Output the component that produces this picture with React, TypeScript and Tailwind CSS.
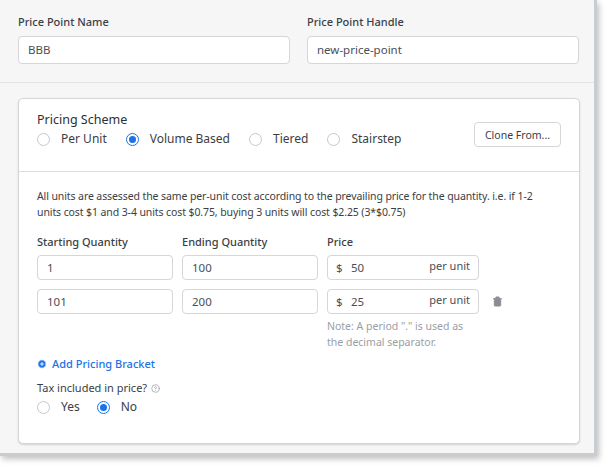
import { Trash2, PlusCircle, HelpCircle } from "lucide-react";

const Radio = ({ label, checked }: { label: string; checked?: boolean }) => (
  <label className="flex items-center gap-[11px]">
    <span
      className={`w-[13px] h-[13px] rounded-full flex items-center justify-center bg-white ${
        checked ? "border border-[#1a73e8]" : "border border-[#c4c7cc]"
      }`}
    >
      {checked && <span className="w-[7px] h-[7px] rounded-full bg-[#1a73e8]"></span>}
    </span>
    <span>{label}</span>
  </label>
);

const Field = ({ value, w }: { value: string; w: string }) => (
  <div className={`${w} h-[25px] border border-[#d4d6da] rounded-[4px] bg-white flex items-center px-[9px] text-[11.5px] text-[#4a4f57]`}>
    {value}
  </div>
);

const PriceField = ({ value }: { value: string }) => (
  <div className="w-[152px] h-[25px] border border-[#d4d6da] rounded-[4px] bg-white flex items-center px-[8px] text-[11.5px] text-[#4a4f57]">
    <span className="w-[15px]">$</span>
    <span className="flex-1">{value}</span>
    <span className="text-[11px] -mt-[3px]">per unit</span>
  </div>
);

export default function App() {
  const rows = [
    { start: "1", end: "100", price: "50" },
    { start: "101", end: "200", price: "25" },
  ];
  return (
    <div className="w-[613px] h-[472px] bg-white font-['Inter',sans-serif] text-[#2b2f36] relative leading-[16px]">
      <div className="w-[597px] h-[456px] bg-[#f6f6f7] border-r-[3px] border-b-[3px] border-[#c9ccd0] shadow-[2px_3px_6px_rgba(0,0,0,0.25)]">
        <div className="flex gap-[17px] px-[18px] pt-[14px] pb-[18px] border-b border-[#e3e4e6]">
          <div className="flex flex-col gap-[6px]">
            <span className="text-[11px] font-medium text-[#3a3e45] leading-[16px]">Price Point Name</span>
            <Field value="BBB" w="w-[272px] h-[28px]" />
          </div>
          <div className="flex flex-col gap-[6px]">
            <span className="text-[11px] font-medium text-[#3a3e45] leading-[16px]">Price Point Handle</span>
            <Field value="new-price-point" w="w-[272px] h-[28px]" />
          </div>
        </div>
        <div className="px-[18px] pt-[15px]">
          <div className="w-[562px] h-[346px] bg-white border border-[#d4d6da] rounded-[5px] shadow-[0_1px_2px_rgba(0,0,0,0.15)]">
            <div className="h-[73px] border-b border-[#dcdee1] flex items-start justify-between pl-[18px] pr-[18px] pt-[13px]">
              <div className="flex flex-col gap-[3px]">
                <span className="text-[12.5px] leading-[16px] text-[#2b2f36]">Pricing Scheme</span>
                <div className="flex gap-[19px] text-[12px] leading-[16px] text-[#3a3e45]">
                  <Radio label="Per Unit" />
                  <Radio label="Volume Based" checked />
                  <Radio label="Tiered" />
                  <Radio label="Stairstep" />
                </div>
              </div>
              <button className="mt-[10px] w-[87px] h-[25px] border border-[#d4d6da] rounded-[4px] text-[10.5px] text-[#3a3e45]">
                Clone From...
              </button>
            </div>
            <div className="px-[18px] pt-[16px]">
              <p className="text-[10.5px] leading-[16px] text-[#3a3e45] pr-[10px] tracking-[-0.1px]">
                All units are assessed the same per-unit cost according to the prevailing price for the quantity. i.e. if 1-2 units cost $1 and 3-4 units cost $0.75, buying 3 units will cost $2.25 (3*$0.75)
              </p>
              <div className="flex gap-[9px] mt-[14px] text-[11px] font-medium text-[#3a3e45]">
                <span className="w-[136px]">Starting Quantity</span>
                <span className="w-[136px]">Ending Quantity</span>
                <span>Price</span>
              </div>
              <div className="flex flex-col gap-[9px] mt-[5px]">
                {rows.map((r, i) => (
                  <div key={r.start} className="flex items-center gap-[9px]">
                    <Field value={r.start} w="w-[136px]" />
                    <Field value={r.end} w="w-[136px]" />
                    <PriceField value={r.price} />
                    {i === 1 && <Trash2 className="w-[11px] h-[11px] text-[#8a8e94] fill-[#8a8e94] ml-[4px]" />}
                  </div>
                ))}
              </div>
              <p className="ml-[290px] mt-[4px] text-[10.5px] leading-[16px] text-[#9a9ea4] w-[150px]">
                Note: A period "." is used as the decimal separator.
              </p>
              <div className="flex items-center gap-[5px] mt-[6px] text-[11px] text-[#1a73e8] font-medium">
                <PlusCircle className="w-[10px] h-[10px] fill-[#1a73e8] text-white" />
                Add Pricing Bracket
              </div>
              <div className="flex items-center gap-[4px] mt-[8px] text-[11px] text-[#3a3e45]">
                Tax included in price?
                <HelpCircle className="w-[9px] h-[9px] text-[#9a9ea4]" />
              </div>
              <div className="flex gap-[17px] mt-[3px] text-[12px] text-[#3a3e45]">
                <Radio label="Yes" />
                <Radio label="No" checked />
              </div>
            </div>
          </div>
        </div>
      </div>
    </div>
  );
}
